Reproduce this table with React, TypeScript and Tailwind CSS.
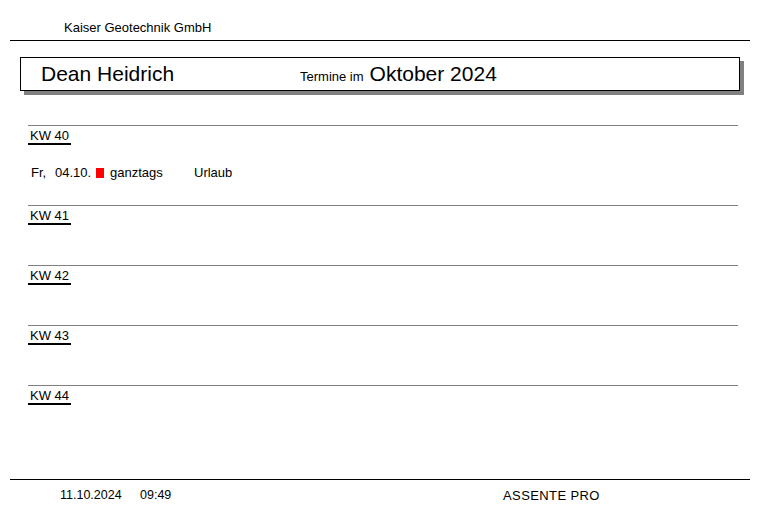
const weeks = [
  {
    kw: "KW 40",
    height: "h-[80px]",
    entries: [{ day: "Fr,", date: "04.10.", time: "ganztags", text: "Urlaub" }],
  },
  { kw: "KW 41", height: "h-[60px]", entries: [] },
  { kw: "KW 42", height: "h-[60px]", entries: [] },
  { kw: "KW 43", height: "h-[60px]", entries: [] },
  { kw: "KW 44", height: "h-[94px]", entries: [] },
];

export default function App() {
  return (
    <div className="w-[780px] h-[519px] bg-white text-black font-['Liberation_Sans',Arial,sans-serif] overflow-hidden">
      <div className="ml-[10px] w-[740px] h-[41px] border-b border-black pt-[20px] pl-[54px] text-[13px] leading-[15px]">
        Kaiser Geotechnik GmbH
      </div>

      <div className="mt-[16px] ml-[20px] w-[720px] h-[34px] border border-black shadow-[4px_4px_0_#808080] flex items-center pl-[20px]">
        <span className="w-[259px] text-[21px] leading-[24px]">Dean Heidrich</span>
        <span className="text-[13px] leading-[15px] mt-[4px] mr-[6px]">Termine im</span>
        <span className="text-[21px] leading-[24px]">Oktober 2024</span>
      </div>

      <div className="mt-[34px]">
        {weeks.map((w) => (
          <div
            key={w.kw}
            className={`ml-[28px] w-[710px] border-t border-[#808080] ${w.height} pt-[2px]`}
          >
            <div className="w-fit px-[2px] border-b-2 border-black text-[13px] leading-[15px]">
              {w.kw}
            </div>
            {w.entries.map((e) => (
              <div key={e.date} className="mt-[20px] flex items-center text-[13px] leading-[15px] pl-[3px]">
                <span className="w-[24px]">{e.day}</span>
                <span className="w-[41px]">{e.date}</span>
                <span className="w-[8px] h-[10px] bg-[#ff0000] mr-[6px]" />
                <span className="w-[84px]">{e.time}</span>
                <span>{e.text}</span>
              </div>
            ))}
          </div>
        ))}
      </div>

      <div className="ml-[10px] w-[740px] border-t border-black flex pt-[8px] text-[12.5px] leading-[15px]">
        <span className="ml-[50px] w-[80px]">11.10.2024</span>
        <span className="w-[363px]">09:49</span>
        <span className="text-[13px] tracking-[0.4px]">ASSENTE PRO</span>
      </div>
    </div>
  );
}
